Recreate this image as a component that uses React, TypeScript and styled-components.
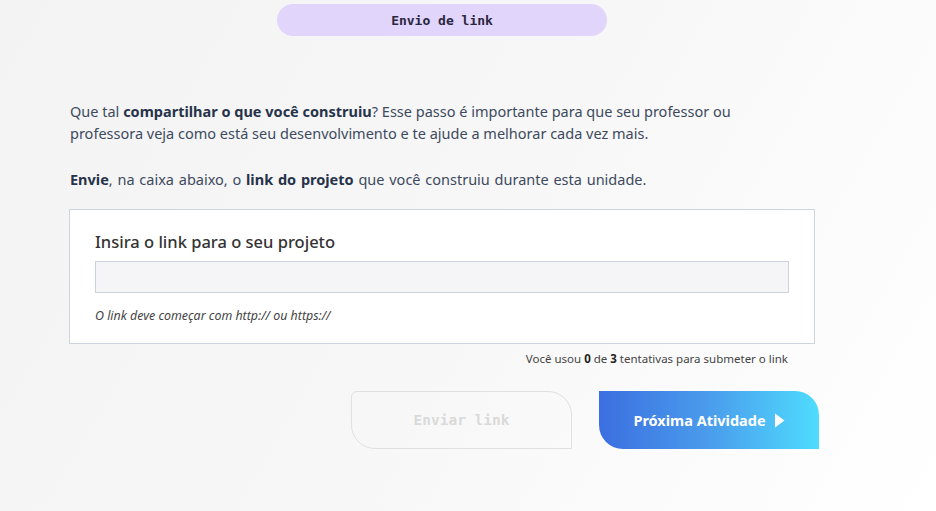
import React from "react";
import styled, { createGlobalStyle } from "styled-components";

const Global = createGlobalStyle`
  html, body { margin: 0; padding: 0; }
  body {
    background: linear-gradient(120deg, #f3f3f3 0%, #f7f7f7 50%, #ffffff 100%);
    min-height: 511px;
    font-family: "Noto Sans", "Lato", sans-serif;
  }
`;

const Page = styled.div`
  width: 936px;
  height: 511px;
  box-sizing: border-box;
  padding: 4px 0 0 69px;
  display: flex;
  flex-direction: column;
`;

const Pill = styled.div`
  margin-left: 208px;
  width: 330px;
  height: 32px;
  border-radius: 16px;
  background: #e1d5fb;
  display: flex;
  align-items: center;
  justify-content: center;
  font-family: "DejaVu Sans Mono", "Liberation Mono", monospace;
  font-weight: 700;
  font-size: 13px;
  color: #2a2540;
`;

const Text = styled.p`
  margin: 0;
  padding-left: 1px;
  font-size: 14.5px;
  line-height: 22px;
  color: #3d4a5e;
  width: 700px;
  b { font-weight: 700; color: #26334a; }
`;

const Intro = styled(Text)`
  margin-top: 64px;
`;

const Instruction = styled(Text)`
  margin-top: 24px;
  word-spacing: 1px;
`;

const Card = styled.div`
  margin-top: 19px;
  width: 746px;
  height: 135px;
  box-sizing: border-box;
  background: #ffffff;
  border: 1px solid #cdd4de;
  padding: 21px 25px 0 25px;
`;

const CardTitle = styled.div`
  font-size: 16.5px;
  font-weight: 500;
  color: #333333;
  line-height: 22px;
`;

const Input = styled.input`
  display: block;
  margin-top: 8px;
  width: 694px;
  height: 32px;
  box-sizing: border-box;
  background: #f5f5f7;
  border: 1px solid #ccd3df;
  outline: none;
`;

const Hint = styled.div`
  margin-top: 14px;
  font-size: 12.4px;
  font-style: italic;
  color: #444444;
`;

const Attempts = styled.div`
  width: 719px;
  text-align: right;
  margin-top: 7px;
  font-size: 11.5px;
  line-height: 16px;
  color: #444444;
  b { font-weight: 700; color: #222; }
`;

const Buttons = styled.div`
  display: flex;
  gap: 27px;
  margin-left: 282px;
  margin-top: 24px;
`;

const SendButton = styled.button`
  width: 221px;
  height: 58px;
  box-sizing: border-box;
  border: 1px solid #e0e0e0;
  border-radius: 6px 24px 0 24px;
  background: transparent;
  font-family: "DejaVu Sans Mono", "Liberation Mono", monospace;
  font-weight: 700;
  font-size: 14.5px;
  color: #dadada;
`;

const NextButton = styled.button`
  width: 220px;
  height: 58px;
  border: none;
  border-radius: 0 24px 0 24px;
  background: linear-gradient(90deg, #3b6fe0 0%, #4a9cec 50%, #4fdcfe 100%);
  color: #ffffff;
  font-family: "Noto Sans", "Lato", sans-serif;
  font-weight: 700;
  font-size: 14.5px;
  display: flex;
  align-items: center;
  justify-content: center;
  gap: 8px;
`;

const Arrow = () => (
  <svg width="11" height="15" viewBox="0 0 11 15">
    <path d="M1 0.5 L10.5 7.5 L1 14.5 Z" fill="#ffffff" />
  </svg>
);

export default function App() {
  return (
    <>
      <Global />
      <Page>
        <Pill>Envio de link</Pill>
        <Intro>
          Que tal <b>compartilhar o que você construiu</b>? Esse passo é importante para que seu professor ou
          <br />
          professora veja como está seu desenvolvimento e te ajude a melhorar cada vez mais.
        </Intro>
        <Instruction>
          <b>Envie</b>, na caixa abaixo, o <b>link do projeto</b> que você construiu durante esta unidade.
        </Instruction>
        <Card>
          <CardTitle>Insira o link para o seu projeto</CardTitle>
          <Input type="text" />
          <Hint>O link deve começar com http:// ou https://</Hint>
        </Card>
        <Attempts>
          Você usou <b>0</b> de <b>3</b> tentativas para submeter o link
        </Attempts>
        <Buttons>
          <SendButton>Enviar link</SendButton>
          <NextButton>
            Próxima Atividade <Arrow />
          </NextButton>
        </Buttons>
      </Page>
    </>
  );
}
